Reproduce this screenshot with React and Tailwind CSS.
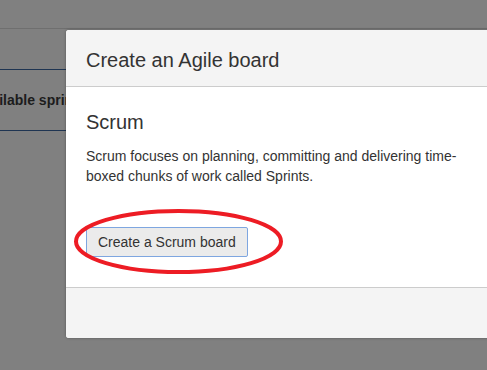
import React from "react";

const BackgroundPage = () => {
  return (
    <div className="w-full">
      {/* top bar */}
      <div className="h-[29px] border-b border-[#6f6f6f]" />
      {/* sprint table */}
      <div className="mt-[40px] border-t border-[#1f3552]" />
      <div className="h-[60px] flex items-center">
        <span className="ml-[-26px] text-[14px] font-bold text-[#1c1c1c]">Available sprints</span>
      </div>
      <div className="border-t border-[#1f3552]" />
    </div>
  );
};

const CreateBoardDialog = () => {
  return (
    <div className="absolute left-[66px] top-[30px] w-[440px] rounded-[3px] bg-white shadow-[0_0_3px_rgba(0,0,0,0.35)] overflow-hidden">
      {/* Header */}
      <div className="bg-[#f4f4f4] px-[20px] pt-[19px] pb-[15px] border-b border-[#cccccc]">
        <h2 className="text-[20px] leading-[22px] text-[#333333]">Create an Agile board</h2>
      </div>

      {/* Body */}
      <div className="px-[20px] pt-[24px] pb-[30px]">
        <h3 className="text-[20px] leading-[22px] text-[#333333]">Scrum</h3>
        <p className="mt-[13px] w-[390px] text-[14px] leading-[20px] text-[#333333]">
          Scrum focuses on planning, committing and delivering time-boxed chunks of work called Sprints.
        </p>
        <button
          type="button"
          className="mt-[41px] h-[30px] px-[11px] border border-[#7ea6e0] rounded-[2px] bg-[#ebebeb] text-[14px] text-[#333333]"
        >
          Create a Scrum board
        </button>
      </div>

      {/* Footer */}
      <div className="h-[51px] bg-[#f4f4f4] border-t border-[#cccccc]" />
    </div>
  );
};

const Annotation = () => {
  return (
    <svg className="absolute left-0 top-0 pointer-events-none" width="487" height="370">
      <ellipse cx="178.5" cy="241.5" rx="102.5" ry="30.5" fill="none" stroke="#ed1c24" strokeWidth="4" />
    </svg>
  );
};

export default function App() {
  return (
    <div
      className="relative w-full h-[370px] overflow-hidden bg-[#808080]"
      style={{ fontFamily: '"Liberation Sans", Arial, sans-serif' }}
    >
      <BackgroundPage />
      <CreateBoardDialog />
      <Annotation />
    </div>
  );
}
